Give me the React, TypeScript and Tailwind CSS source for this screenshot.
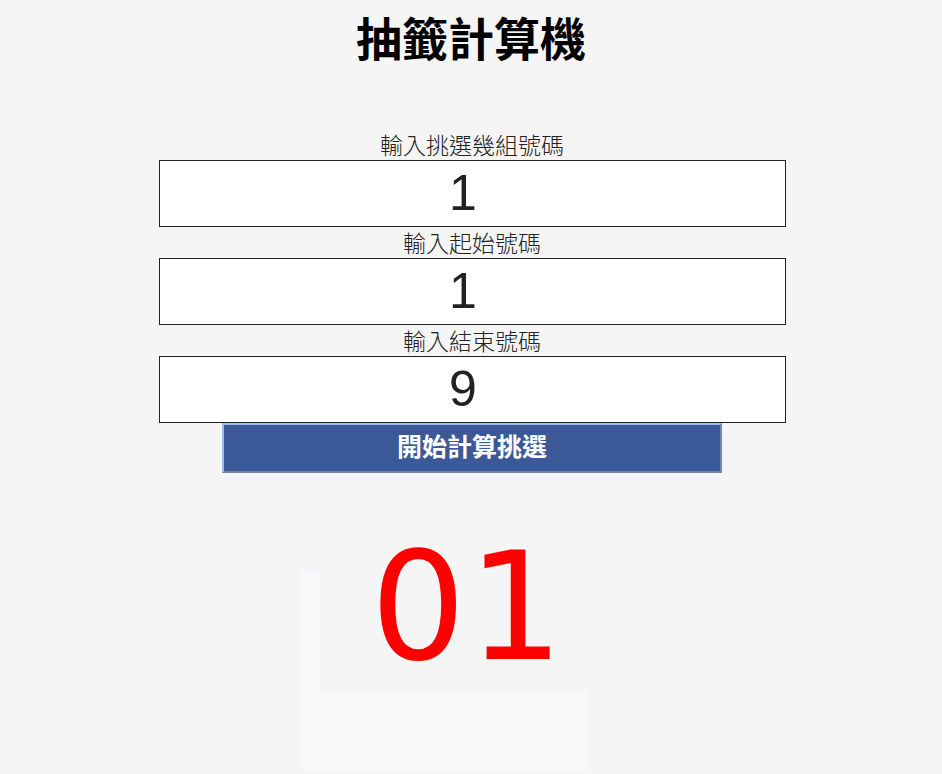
import React, { useState } from 'react'

const cjk = '"Noto Sans CJK TC", "Noto Sans CJK SC", sans-serif'

function Field({ label, value, onChange }: { label: string; value: string; onChange: (v: string) => void }) {
  return (
    <>
      <label className="h-[31px] leading-[31px] text-[23px] font-light text-[#222]" style={{ fontFamily: cjk }}>
        {label}
      </label>
      <input
        value={value}
        onChange={e => onChange(e.target.value)}
        className="w-[627px] h-[67px] border border-[#222] bg-white pr-[18px] text-center text-[50px] text-[#222] outline-none"
        style={{ fontFamily: '"Liberation Sans", Arial, sans-serif' }}
      />
    </>
  )
}

export default function App() {
  const [count, setCount] = useState('1')
  const [start, setStart] = useState('1')
  const [end, setEnd] = useState('9')

  return (
    <div className="min-h-screen bg-[#f5f5f5] overflow-hidden">
      <h1 className="h-[73px] leading-[73px] text-center text-[46px] font-bold text-black" style={{ fontFamily: cjk }}>
        抽籤計算機
      </h1>

      <div className="mt-[56px] flex flex-col items-center pl-[2px]">
        <Field label="輸入挑選幾組號碼" value={count} onChange={setCount} />
        <Field label="輸入起始號碼" value={start} onChange={setStart} />
        <Field label="輸入結束號碼" value={end} onChange={setEnd} />
        <button
          className="w-[500px] h-[50px] bg-[#3b5998] text-white text-[25px] font-bold border-2 border-t-[#9dbdf0] border-l-[#9dbdf0] border-r-[#7486a8] border-b-[#7486a8]"
          style={{ fontFamily: '"Liberation Serif", ' + cjk }}
        >
          開始計算挑選
        </button>
      </div>

      {/* result */}
      <div className="relative mt-[97px]">
        <div className="ml-[301px] w-[288px]">
          <div className="w-[19px] h-[120px] bg-[#f8f8fa]" />
          <div className="w-[288px] h-[80px] bg-[#f8f8fa]" />
        </div>
        <div
          className="absolute left-0 right-0 top-[-38px] pr-[6px] text-center text-[150px] leading-[150px] tracking-[2px] text-[#ff0000]"
          style={{ fontFamily: '"DejaVu Sans", sans-serif' }}
        >
          01
        </div>
      </div>
    </div>
  )
}
